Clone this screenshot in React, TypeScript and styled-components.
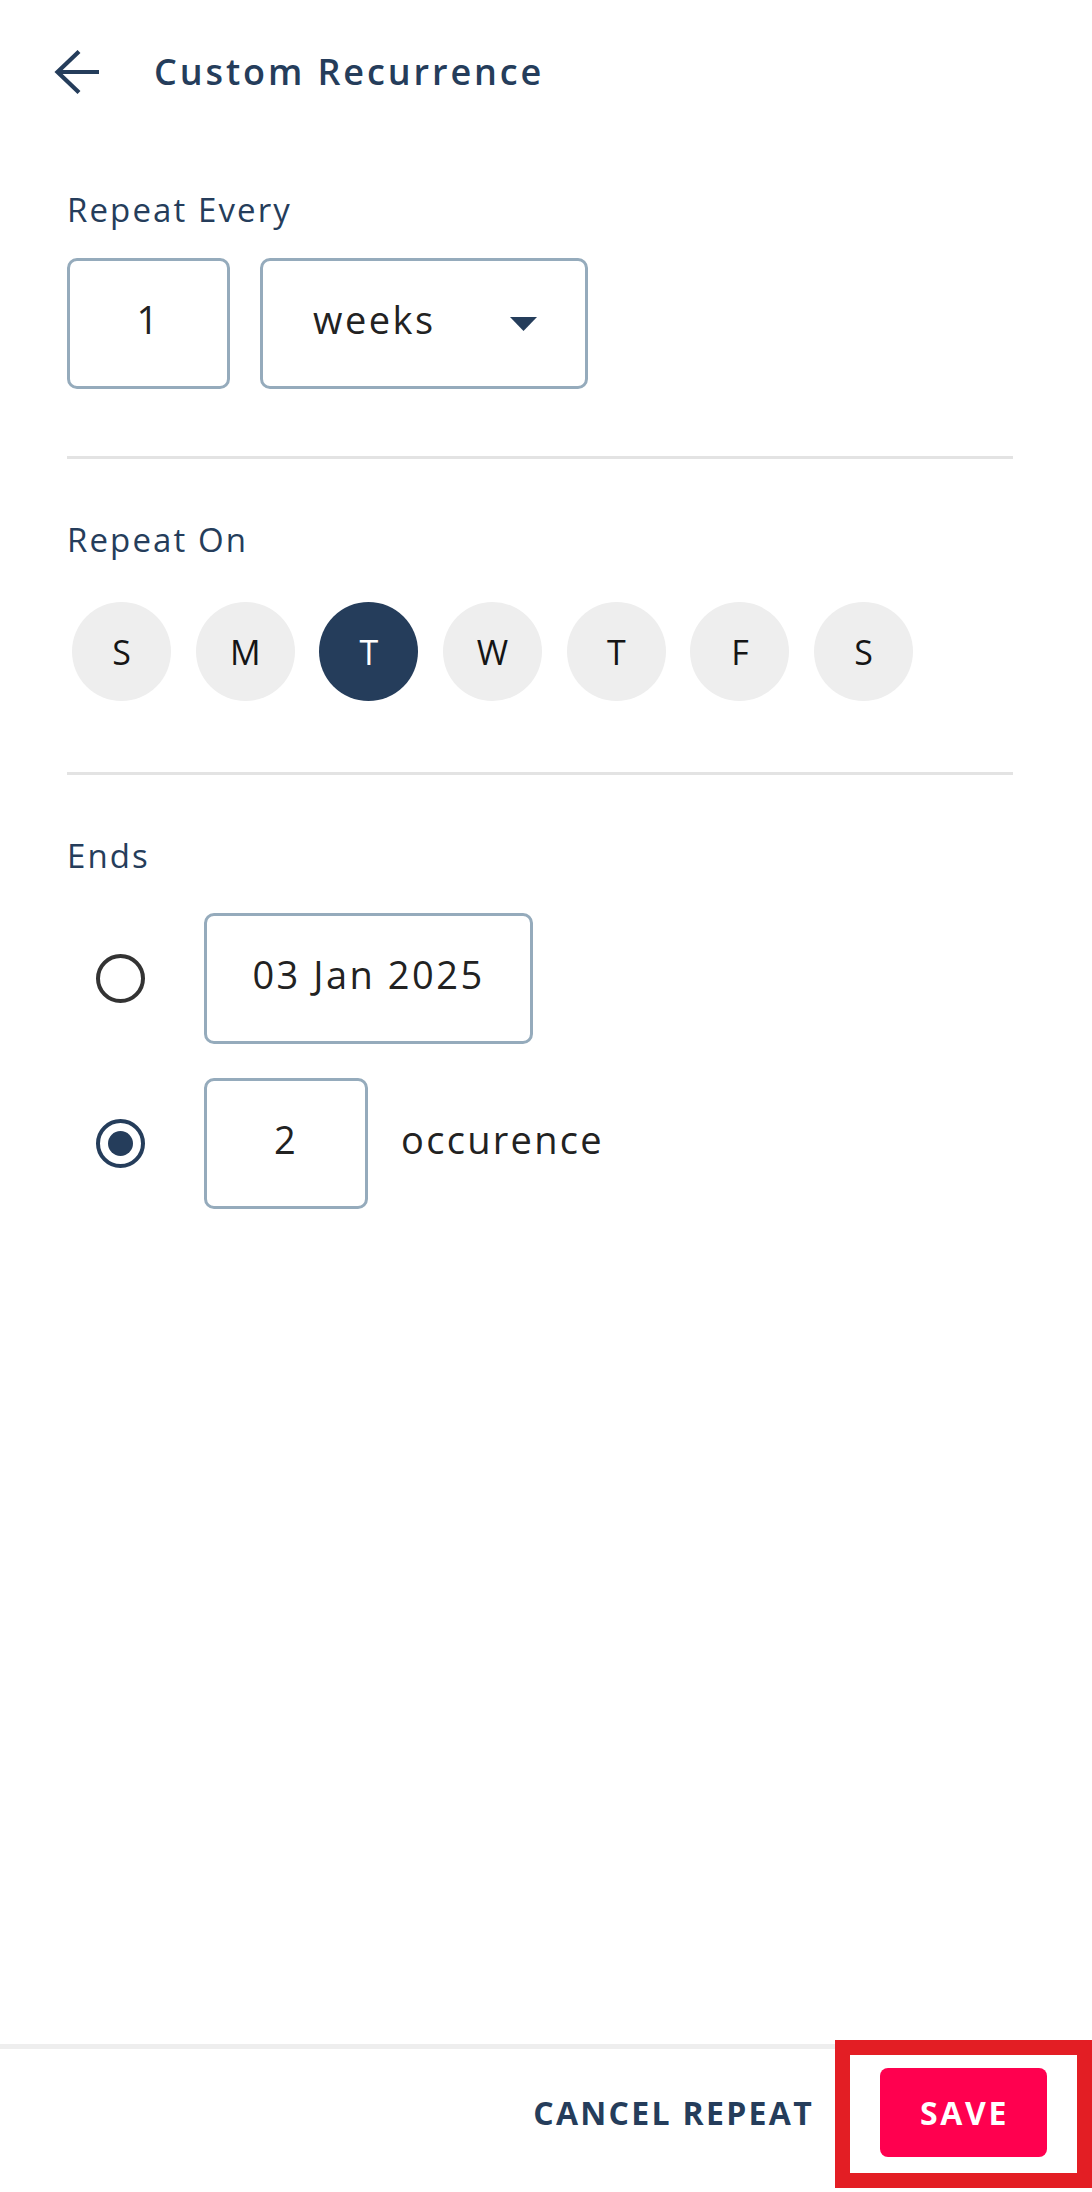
import React from "react";
import styled, { createGlobalStyle } from "styled-components";

const NAVY = "#253D5B";
const BORDER = "#95ABBC";

const Global = createGlobalStyle`
  html, body { margin: 0; padding: 0; background: #ffffff; }
  * { box-sizing: border-box; }
  body { font-family: "Open Sans", "Noto Sans", sans-serif; }
`;

const Page = styled.div`
  min-height: 2192px;
  display: flex;
  flex-direction: column;
  background: #ffffff;
`;

const Header = styled.header`
  height: 144px;
  display: flex;
  align-items: center;
  padding-left: 54px;
  gap: 54px;
`;

const BackButton = styled.button`
  border: none;
  background: none;
  padding: 0;
  width: 46px;
  height: 44px;
  display: flex;
  cursor: pointer;
`;

const Title = styled.h1`
  margin: 0;
  font-size: 36px;
  line-height: 1;
  font-weight: 600;
  letter-spacing: 2.9px;
  color: ${NAVY};
`;

const Content = styled.main`
  display: flex;
  flex-direction: column;
  padding: 0 79px 0 67px;
`;

const Label = styled.div<{ $top: number }>`
  margin-top: ${(p) => p.$top}px;
  font-size: 33px;
  line-height: 40px;
  font-weight: 500;
  letter-spacing: 2.1px;
  color: ${NAVY};
`;

const InputRow = styled.div`
  margin-top: 28px;
  display: flex;
  gap: 30px;
`;

const Field = styled.div<{ $w: number; $spread?: boolean }>`
  width: ${(p) => p.$w}px;
  height: 131px;
  border: 3px solid ${BORDER};
  border-radius: 10px;
  display: flex;
  align-items: center;
  justify-content: ${(p) => (p.$spread ? "space-between" : "center")};
  padding: ${(p) => (p.$spread ? "0 48px 0 50px" : "0")};
`;

const Value = styled.span`
  font-size: 38px;
  line-height: 1.2;
  color: #222222;
  letter-spacing: 2.5px;
  padding-bottom: 8px;
`;

const Suffix = styled(Value)`
  margin-left: 33px;
  letter-spacing: 2.3px;
`;

const Divider = styled.hr<{ $top: number }>`
  margin: ${(p) => p.$top}px 0 0 0;
  border: none;
  height: 3px;
  background: #e3e3e3;
`;

const DayRow = styled.div`
  margin-top: 42px;
  padding-left: 5px;
  display: flex;
  gap: 24.7px;
`;

const Day = styled.button<{ $active?: boolean }>`
  width: 99px;
  height: 99px;
  border-radius: 50%;
  border: none;
  padding: 0;
  background: ${(p) => (p.$active ? NAVY : "#EEEEEE")};
  color: ${(p) => (p.$active ? "#ffffff" : "#151515")};
  font-family: "Open Sans", "Noto Sans", sans-serif;
  font-size: 34px;
  font-weight: 400;
  display: flex;
  align-items: center;
  justify-content: center;
`;

const EndRow = styled.div<{ $top: number }>`
  margin-top: ${(p) => p.$top}px;
  display: flex;
  align-items: center;
  padding-left: 29px;
`;

const Radio = styled.span<{ $checked?: boolean }>`
  width: 49px;
  height: 49px;
  border-radius: 50%;
  border: 4.5px solid ${(p) => (p.$checked ? NAVY : "#333333")};
  display: flex;
  align-items: center;
  justify-content: center;
  margin-right: 59px;
  &::after {
    content: "";
    width: 25px;
    height: 25px;
    border-radius: 50%;
    background: ${NAVY};
    display: ${(p) => (p.$checked ? "block" : "none")};
  }
`;

const Footer = styled.footer`
  margin-top: auto;
  position: relative;
  border-top: 5px solid #eeeeee;
  display: flex;
  justify-content: flex-end;
  align-items: center;
  gap: 66px;
  padding: 19px 45px 35px 0;
`;

const CancelButton = styled.button`
  border: none;
  background: none;
  padding: 0;
  font-family: "Open Sans", "Noto Sans", sans-serif;
  font-size: 32px;
  font-weight: 700;
  letter-spacing: 2.3px;
  color: ${NAVY};
`;

const SaveButton = styled.button`
  width: 167px;
  height: 89px;
  border: none;
  border-radius: 8px;
  background: #ff004f;
  color: #ffffff;
  font-family: "Open Sans", "Noto Sans", sans-serif;
  font-size: 32px;
  font-weight: 700;
  letter-spacing: 2.6px;
  padding: 0 0 0 2px;
`;

const Highlight = styled.div`
  position: absolute;
  top: -9px;
  right: 0;
  width: 257px;
  height: 148px;
  border: 15px solid #e31e24;
  pointer-events: none;
`;

const days = ["S", "M", "T", "W", "T", "F", "S"];

export default function App() {
  return (
    <>
      <Global />
      <Page>
        <Header>
          <BackButton aria-label="Back">
            <svg width="46" height="44" viewBox="0 0 46 44">
              <path
                d="M3 22 H45 M25 1.5 L3.5 22 L25 42.5"
                fill="none"
                stroke={NAVY}
                strokeWidth="4.2"
              />
            </svg>
          </BackButton>
          <Title>Custom Recurrence</Title>
        </Header>
        <Content>
          <Label $top={46}>Repeat Every</Label>
          <InputRow>
            <Field $w={163}>
              <Value>1</Value>
            </Field>
            <Field $w={328} $spread>
              <Value>weeks</Value>
              <svg width="27" height="14" viewBox="0 0 27 14">
                <path d="M0 0 H27 L13.5 14 Z" fill={NAVY} />
              </svg>
            </Field>
          </InputRow>
          <Divider $top={67} />
          <Label $top={61}>Repeat On</Label>
          <DayRow>
            {days.map((d, i) => (
              <Day key={i} $active={i === 2}>
                {d}
              </Day>
            ))}
          </DayRow>
          <Divider $top={71} />
          <Label $top={61}>Ends</Label>
          <EndRow $top={37}>
            <Radio />
            <Field $w={329}>
              <Value>03 Jan 2025</Value>
            </Field>
          </EndRow>
          <EndRow $top={34}>
            <Radio $checked />
            <Field $w={164}>
              <Value>2</Value>
            </Field>
            <Suffix>occurence</Suffix>
          </EndRow>
        </Content>
        <Footer>
          <CancelButton>CANCEL REPEAT</CancelButton>
          <SaveButton>SAVE</SaveButton>
          <Highlight />
        </Footer>
      </Page>
    </>
  );
}
